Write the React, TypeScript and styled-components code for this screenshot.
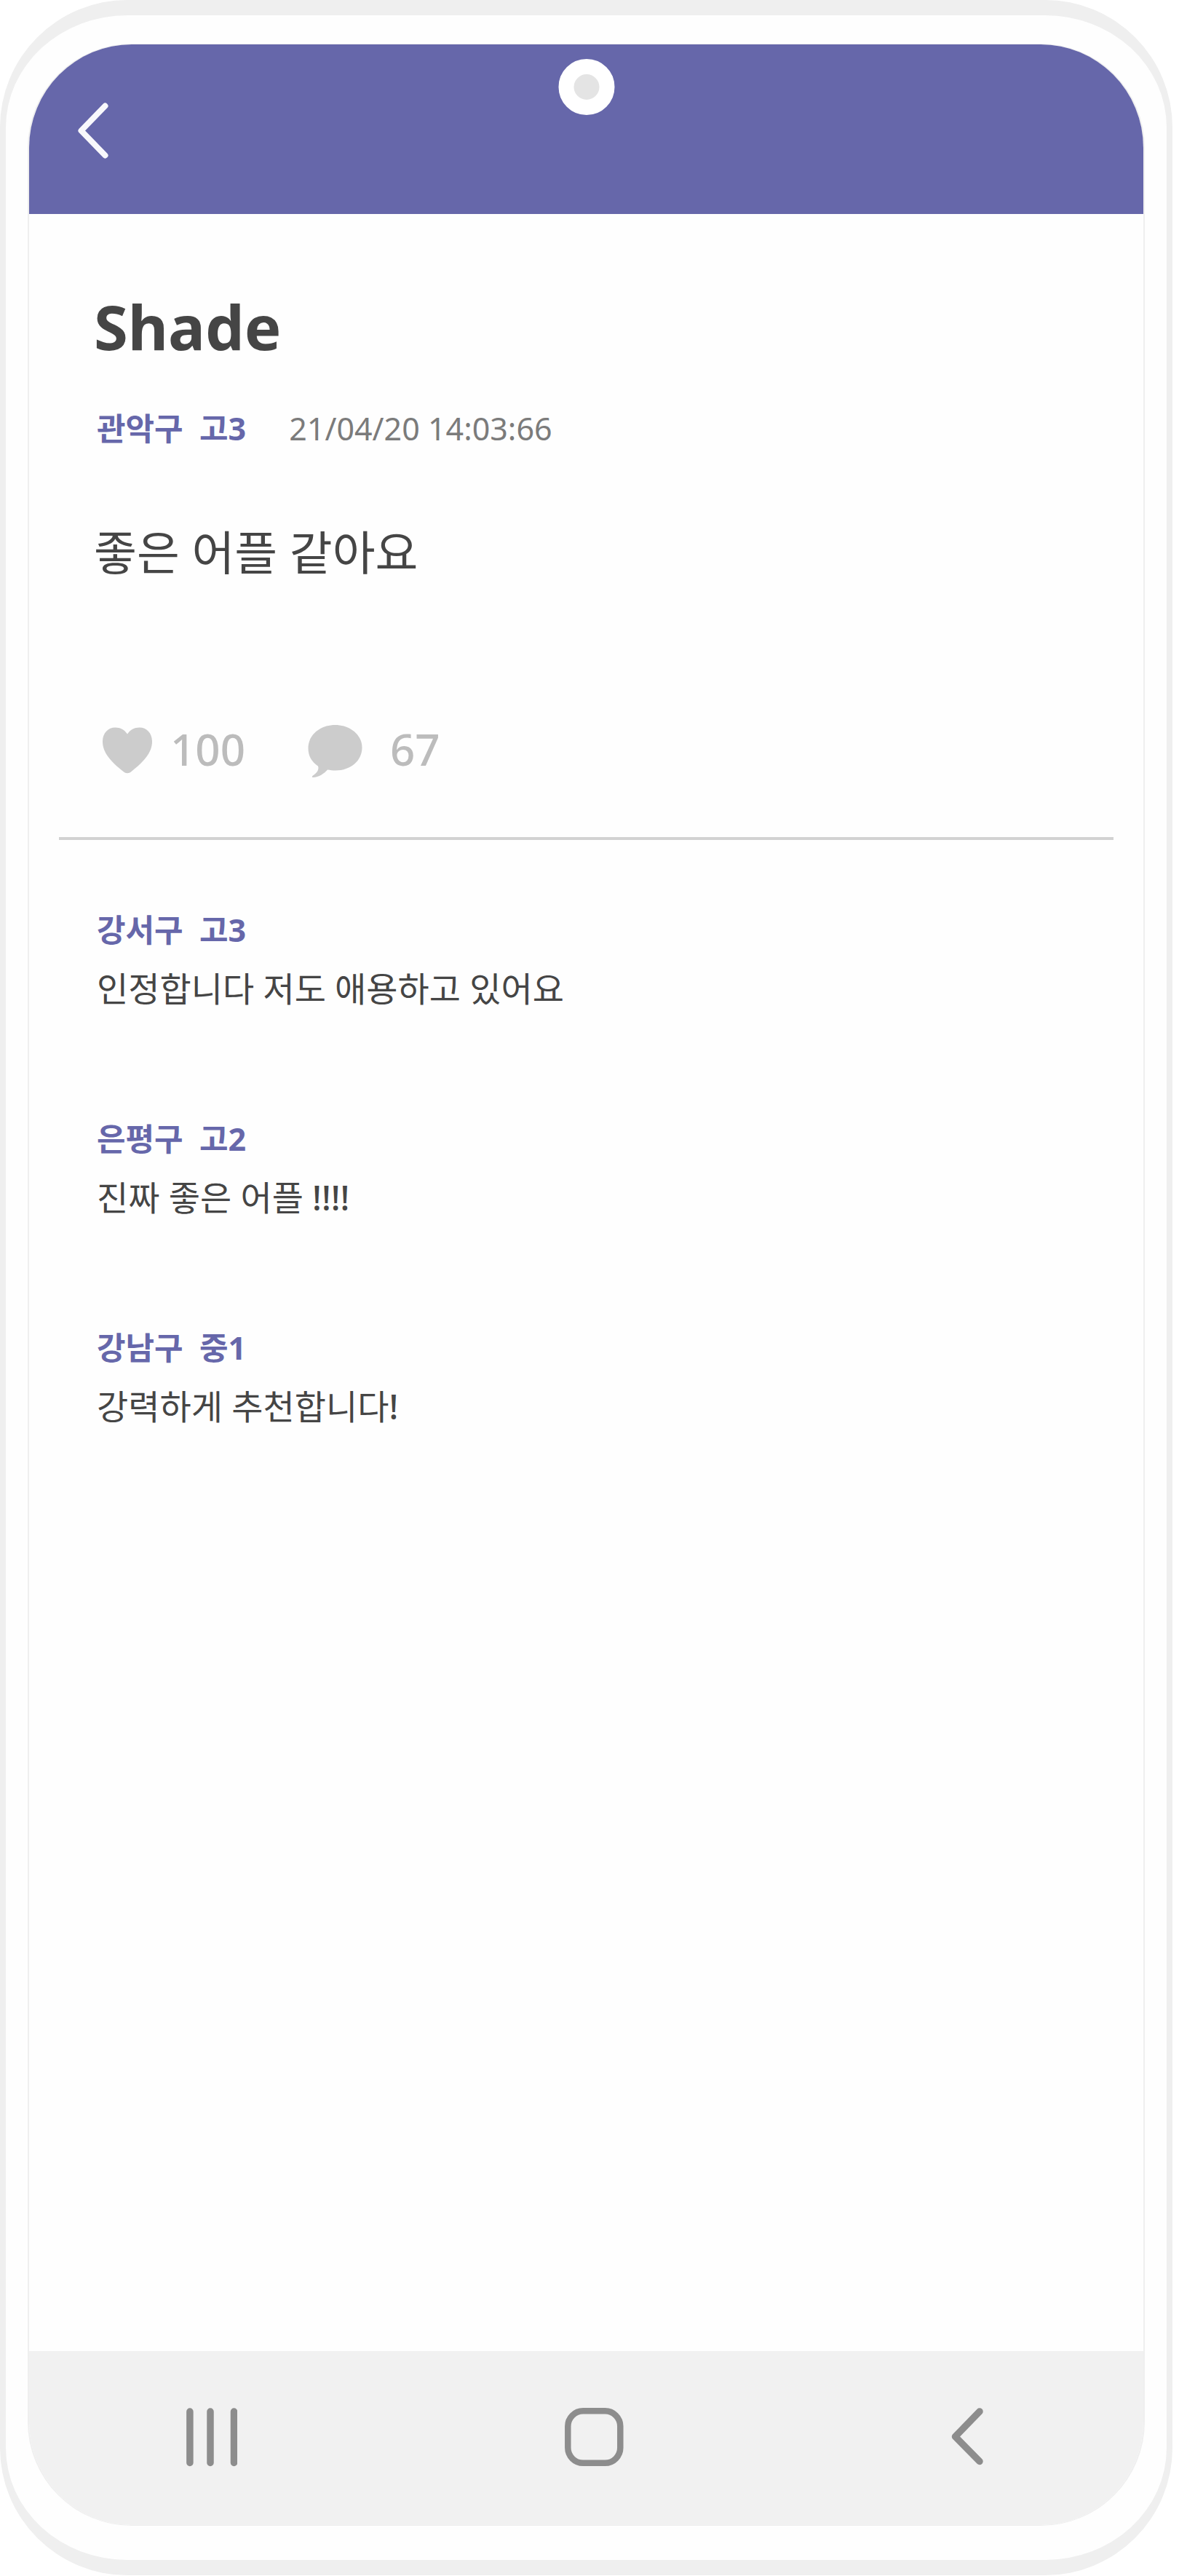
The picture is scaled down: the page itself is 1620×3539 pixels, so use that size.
import React from "react";
import styled, { createGlobalStyle } from "styled-components";

const color = {
  brand: "#6667aa",
  text: "#454545",
  date: "#7b7b7b",
  count: "#bcbcbc",
  icon: "#cccccc",
  line: "#d2d2d2",
  frame: "#efefef",
  nav: "#f1f1f1",
  navIcon: "#8d8d8d",
  surface: "#fefefe",
};

const GlobalStyle = createGlobalStyle`
  *, *::before, *::after { box-sizing: border-box; }
  body {
    margin: 0;
    background: #ffffff;
    color: ${color.text};
    font-family: "Noto Sans", "Noto Sans CJK KR", sans-serif;
  }
  h1, p, ul { margin: 0; padding: 0; }
  button {
    padding: 0;
    border: 0;
    background: none;
    font: inherit;
    color: inherit;
    cursor: pointer;
  }
  svg { display: block; }
`;

const Page = styled.div`
  display: flex;
  min-height: 100vh;
  padding: 0 9px 1px 0;
`;

const Phone = styled.div`
  display: flex;
  flex: 1;
  padding: 39px 30px 47px;
  border: solid ${color.frame};
  border-width: 21px 8px;
  border-radius: 175px;
  background: ${color.surface};
`;

const Screen = styled.div`
  display: flex;
  flex: 1;
  flex-direction: column;
  overflow: hidden;
  border: solid ${color.frame};
  border-width: 1px 2px;
  border-radius: 143px;
  background: ${color.surface};
`;

const AppBar = styled.header`
  position: relative;
  display: flex;
  align-items: flex-start;
  padding: 80px 66px 76px;
  background: ${color.brand};
`;

const Camera = styled.span`
  position: absolute;
  top: 20px;
  left: 50%;
  width: 77px;
  height: 77px;
  border: 21px solid #ffffff;
  border-radius: 50%;
  background: #e4e4e4;
  transform: translateX(-50%);
`;

const Main = styled.main`
  flex: 1;
  padding: 104px 41px 0;
`;

const Post = styled.article`
  display: flex;
  flex-direction: column;
  align-items: flex-start;
  padding: 0 48px 81px;
  border-bottom: 4px solid ${color.line};
`;

const Title = styled.h1`
  font-size: 85px;
  font-weight: 700;
  line-height: 100px;
`;

const Meta = styled.div`
  display: flex;
  gap: 59px;
  margin-top: 61px;
  padding-left: 4px;
`;

const Author = styled.p`
  color: ${color.brand};
  font-size: 43px;
  font-weight: 700;
  line-height: 60px;
  white-space: pre;
`;

const PostDate = styled.time`
  color: ${color.date};
  font-size: 43px;
  line-height: 60px;
`;

const Body = styled.p`
  margin-top: 100px;
  font-size: 64px;
  line-height: 80px;
`;

const Stats = styled.div`
  display: flex;
  gap: 86px;
  margin-top: 190px;
  padding-left: 11px;
`;

const Stat = styled.button<{ $gap: number }>`
  display: flex;
  gap: ${(p) => p.$gap}px;
  color: ${color.count};
  font-size: 60px;
  font-weight: 500;
  line-height: 80px;
`;

const Comments = styled.ul`
  display: flex;
  flex-direction: column;
  gap: 147px;
  padding: 94px 52px;
  list-style: none;
`;

const Comment = styled.li`
  display: flex;
  flex-direction: column;
  gap: 20px;
`;

const CommentText = styled.p`
  font-size: 47px;
  line-height: 60px;
`;

const Emphasis = styled.span`
  font-weight: 500;
`;

const NavBar = styled.nav`
  display: flex;
  justify-content: space-between;
  padding: 78px 220px 80px 216px;
  background: ${color.nav};
`;

const comments = [
  { author: "강서구  고3", text: "인정합니다 저도 애용하고 있어요", mark: "" },
  { author: "은평구  고2", text: "진짜 좋은 어플 ", mark: "!!!!" },
  { author: "강남구  중1", text: "강력하게 추천합니다", mark: "!" },
];

const HeaderBackIcon = () => (
  <svg width="44" height="77" viewBox="0 0 44 77" fill="none" stroke="#f8f8fc" strokeWidth="8" strokeLinecap="round" strokeLinejoin="round">
    <path d="M38.500 4.500L5.500 38.500L38.500 72.500" />
  </svg>
);

const HeartIcon = () => (
  <svg width="70" height="80" viewBox="0 0 70 80" fill={color.icon}>
    <path d="M35 19.500C31 13.500 25.500 10.500 18.500 10.500C8 10.500 1 18.500 1 30C1 45 13 58 29.500 71C33 74 37 74 40.500 71C57 58 69 45 69 30C69 18.500 62 10.500 51.500 10.500C44.500 10.500 39 13.500 35 19.500Z" />
  </svg>
);

const BubbleIcon = () => (
  <svg width="75" height="80" viewBox="0 0 75 80" fill={color.icon}>
    <path d="M37.500 7C58 7 74.500 20.500 74.500 38C74.500 56 59 69.500 38 69.500C34 69.500 30.500 69 27 68.500C22 74 15.500 78.500 7 79C5.500 79 5.500 77.500 7 76.500C13 73 15.500 68 14 63.500C5.500 58 .5 49.500 .5 39C.5 21 16.500 7 37.500 7Z" />
  </svg>
);

const RecentsIcon = () => (
  <svg width="70" height="81" viewBox="0 0 70 81" stroke={color.navIcon} strokeWidth="9.500" strokeLinecap="round">
    <path d="M4.900 5V75.500M33 5V75.500M65.500 5V75.500" />
  </svg>
);

const HomeIcon = () => (
  <svg width="81" height="81" viewBox="0 0 81 81" fill="none" stroke={color.navIcon} strokeWidth="8.500">
    <rect x="4.300" y="4.300" width="72" height="71.500" rx="21" />
  </svg>
);

const NavBackIcon = () => (
  <svg width="44" height="81" viewBox="0 0 44 81" fill="none" stroke={color.navIcon} strokeWidth="9.500" strokeLinecap="round" strokeLinejoin="round">
    <path d="M39 5L5.500 39.500L39 73.500" />
  </svg>
);

export default function App() {
  return (
    <>
      <GlobalStyle />
      <Page>
        <Phone>
          <Screen>
            <AppBar>
              <button type="button" aria-label="뒤로">
                <HeaderBackIcon />
              </button>
              <Camera />
            </AppBar>
            <Main>
              <Post>
                <Title>Shade</Title>
                <Meta>
                  <Author>{"관악구  고3"}</Author>
                  <PostDate>21/04/20 14:03:66</PostDate>
                </Meta>
                <Body>좋은 어플 같아요</Body>
                <Stats>
                  <Stat type="button" $gap={24}>
                    <HeartIcon />
                    100
                  </Stat>
                  <Stat type="button" $gap={38}>
                    <BubbleIcon />
                    67
                  </Stat>
                </Stats>
              </Post>
              <Comments>
                {comments.map((c) => (
                  <Comment key={c.author}>
                    <Author>{c.author}</Author>
                    <CommentText>
                      {c.text}
                      {c.mark && <Emphasis>{c.mark}</Emphasis>}
                    </CommentText>
                  </Comment>
                ))}
              </Comments>
            </Main>
            <NavBar>
              <button type="button" aria-label="최근 앱">
                <RecentsIcon />
              </button>
              <button type="button" aria-label="홈">
                <HomeIcon />
              </button>
              <button type="button" aria-label="이전">
                <NavBackIcon />
              </button>
            </NavBar>
          </Screen>
        </Phone>
      </Page>
    </>
  );
}
